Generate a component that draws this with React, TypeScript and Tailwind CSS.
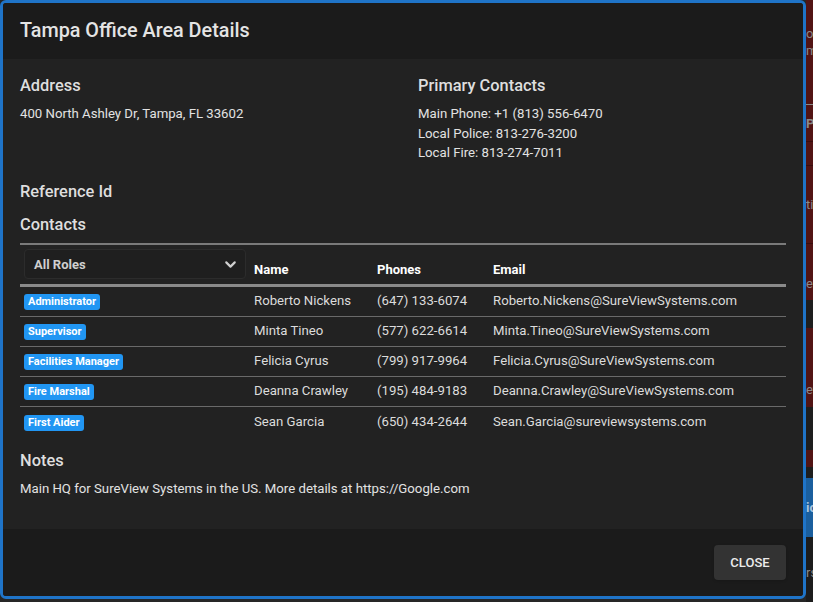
import { ChevronDown } from 'lucide-react'

const contacts = [
  { role: 'Administrator', name: 'Roberto Nickens', phone: '(647) 133-6074', email: 'Roberto.Nickens@SureViewSystems.com' },
  { role: 'Supervisor', name: 'Minta Tineo', phone: '(577) 622-6614', email: 'Minta.Tineo@SureViewSystems.com' },
  { role: 'Facilities Manager', name: 'Felicia Cyrus', phone: '(799) 917-9964', email: 'Felicia.Cyrus@SureViewSystems.com' },
  { role: 'Fire Marshal', name: 'Deanna Crawley', phone: '(195) 484-9183', email: 'Deanna.Crawley@SureViewSystems.com' },
  { role: 'First Aider', name: 'Sean Garcia', phone: '(650) 434-2644', email: 'Sean.Garcia@sureviewsystems.com' },
]

const cols = 'grid grid-cols-[230px_123px_116px_1fr]'

// what peeks out behind the modal on the right
function BackdropStrip() {
  return (
    <div className="flex-1 flex flex-col overflow-hidden whitespace-nowrap text-[13px] text-[#8a8a8a] leading-none">
      <div className="h-[104px] bg-[#521414] flex flex-col pt-[27px] gap-[4px]">
        <span>on</span>
        <span>m</span>
      </div>
      <div className="h-px bg-[#8a8a8a]" />
      <div className="h-[36px] bg-[#521414] flex items-center font-bold">PL</div>
      <div className="h-px bg-[#3a0d0d]" />
      <div className="h-[23px] bg-[#521414]" />
      <div className="h-px bg-[#3a0d0d]" />
      <div className="h-[77px] bg-[#521414] flex items-center">tif</div>
      <div className="h-px bg-[#3a0d0d]" />
      <div className="h-[56px] bg-[#521414] flex items-end pb-[10px]">ev</div>
      <div className="h-[28px] bg-[#1e1e1e]" />
      <div className="h-[79px] bg-[#521414] flex items-end pb-[11px]">ev</div>
      <div className="h-[43px] bg-[#1e1e1e]" />
      <div className="h-[17px] bg-[#521414]" />
      <div className="h-[11px] bg-[#1e1e1e]" />
      <div className="h-[59px] bg-[#1b5f9e] flex items-center text-[#a9c4de] font-bold">io</div>
      <div className="flex-1 bg-[#1c1c1c] flex items-start pt-[29px]">rs</div>
    </div>
  )
}

export default function App() {
  return (
    <div
      className="w-[813px] h-[602px] bg-[#262626] flex overflow-hidden text-[#e2e2e2]"
      style={{ fontFamily: 'Roboto, "Noto Sans", sans-serif' }}
    >
      <div className="w-[806px] h-[599px] border-[3px] border-[#1f74c8] rounded-md overflow-hidden flex flex-col bg-[#222222] shrink-0">
        {/* Header */}
        <div className="h-[56px] bg-[#1b1b1b] px-[17px] flex items-center">
          <h2 className="text-[19.8px] font-medium text-[#e4e4e4]">Tampa Office Area Details</h2>
        </div>

        {/* Body */}
        <div className="flex-1 px-[17px] pt-[15px]">
          <div className="grid grid-cols-[398px_1fr]">
            <div>
              <h3 className="text-[16.4px] leading-6 font-medium text-[#dedede]">Address</h3>
              <p className="mt-[6px] text-[13.2px] leading-5">400 North Ashley Dr, Tampa, FL 33602</p>
            </div>
            <div>
              <h3 className="text-[16.4px] leading-6 font-medium text-[#dedede]">Primary Contacts</h3>
              <div className="mt-[6px] text-[13.2px] leading-[19.5px]">
                <p>Main Phone: +1 (813) 556-6470</p>
                <p>Local Police: 813-276-3200</p>
                <p>Local Fire: 813-274-7011</p>
              </div>
            </div>
          </div>

          <h3 className="mt-[17px] text-[16.4px] leading-6 font-medium text-[#dedede]">Reference Id</h3>
          <h3 className="mt-[9px] text-[16.4px] leading-6 font-medium text-[#dedede]">Contacts</h3>

          {/* Table */}
          <div className="mt-[6px] border-t-2 border-[#7a7a7a]">
            <div className={`${cols} h-[42px] items-end border-b-[3px] border-[#8a8a8a] text-[13px] leading-[15px] font-bold text-white`}>
              <div className="pl-1 self-center">
                <div className="h-[30px] w-[222px] rounded border border-[#2c2c2c] bg-[#1f1f1f] flex items-center justify-between pl-[9px] pr-[6px]">
                  <span className="text-[#cfcfcf]">All Roles</span>
                  <ChevronDown className="w-[17px] h-[17px] text-[#d0d0d0]" strokeWidth={3} />
                </div>
              </div>
              <div className="pl-1 pb-[7px]">Name</div>
              <div className="pl-1 pb-[7px]">Phones</div>
              <div className="pl-1 pb-[7px]">Email</div>
            </div>
            {contacts.map((c, i) => (
              <div
                key={c.email}
                className={`${cols} h-[30px] items-center text-[13.2px] text-[#dcdcdc] ${
                  i < contacts.length - 1 ? 'border-b border-[#6a6a6a]' : ''
                }`}
              >
                <div className="pl-1">
                  <span className="inline-block h-[16px] leading-[16px] px-[4px] rounded-[3px] bg-[#2196f3] text-white text-[11px] font-bold">
                    {c.role}
                  </span>
                </div>
                <div className="pl-1">{c.name}</div>
                <div className="pl-1">{c.phone}</div>
                <div className="pl-1">{c.email}</div>
              </div>
            ))}
          </div>

          <h3 className="mt-[12px] text-[16.4px] leading-6 font-medium text-[#dedede]">Notes</h3>
          <p className="mt-[6px] text-[13.2px] leading-5">Main HQ for SureView Systems in the US. More details at https://Google.com</p>
        </div>

        {/* Footer */}
        <div className="h-[67px] bg-[#1b1b1b] px-[17px] flex items-center justify-end">
          <button className="h-[35px] w-[72px] rounded bg-[#333333] text-[13px] font-medium text-[#ececec] shadow-sm">
            CLOSE
          </button>
        </div>
      </div>
      <BackdropStrip />
    </div>
  )
}
